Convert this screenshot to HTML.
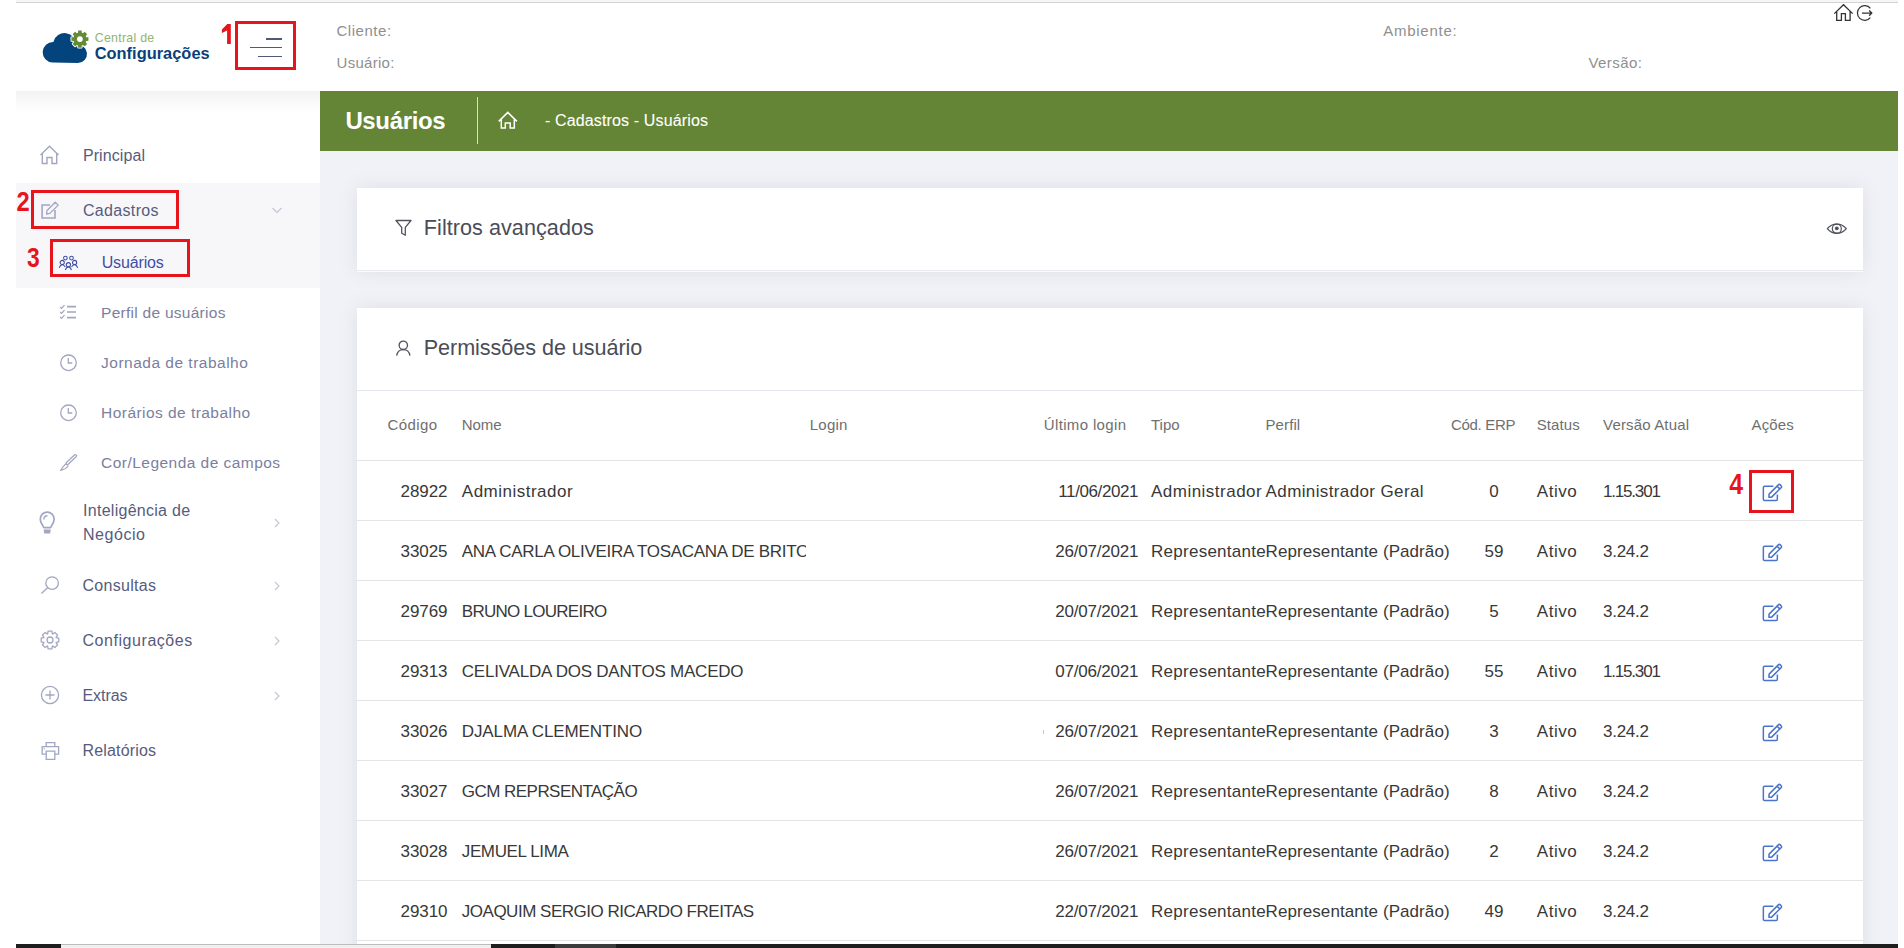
<!DOCTYPE html>
<html><head><meta charset="utf-8"><title>Usuários</title>
<style>
html,body{margin:0;padding:0;}
body{width:1904px;height:948px;position:relative;overflow:hidden;background:#fff;font-family:"Liberation Sans", sans-serif;}
.t{position:absolute;white-space:nowrap;}
.b{position:absolute;}
</style></head><body>
<div class="b" style="left:16px;top:0px;width:1882px;height:2px;background:#f6f6f6;"></div>
<div class="b" style="left:16px;top:2px;width:1882px;height:1px;background:#d3d3d3;"></div>
<svg class="b" style="left:40px;top:26px;" width="60" height="42" viewBox="0 0 60 42" fill="none">
<path d="M12.6 36.6 A10.2 10.2 0 1 1 13.41 15.93 A11.5 11.5 0 0 1 36.09 18.98 A9.1 9.1 0 1 1 37.9 37 Z" fill="#03447c"/>
<polygon points="37.95,6.79 38.17,4.57 41.63,4.57 41.85,6.79 42.98,7.26 44.71,5.85 47.15,8.29 45.74,10.02 46.21,11.15 48.43,11.37 48.43,14.83 46.21,15.05 45.74,16.18 47.15,17.91 44.71,20.35 42.98,18.94 41.85,19.41 41.63,21.63 38.17,21.63 37.95,19.41 36.82,18.94 35.09,20.35 32.65,17.91 34.06,16.18 33.59,15.05 31.37,14.83 31.37,11.37 33.59,11.15 34.06,10.02 32.65,8.29 35.09,5.85 36.82,7.26" fill="#658a35" stroke="#fff" stroke-width="1.8" stroke-linejoin="round"/>
<polygon points="37.95,6.79 38.17,4.57 41.63,4.57 41.85,6.79 42.98,7.26 44.71,5.85 47.15,8.29 45.74,10.02 46.21,11.15 48.43,11.37 48.43,14.83 46.21,15.05 45.74,16.18 47.15,17.91 44.71,20.35 42.98,18.94 41.85,19.41 41.63,21.63 38.17,21.63 37.95,19.41 36.82,18.94 35.09,20.35 32.65,17.91 34.06,16.18 33.59,15.05 31.37,14.83 31.37,11.37 33.59,11.15 34.06,10.02 32.65,8.29 35.09,5.85 36.82,7.26" fill="#658a35"/>
<circle cx="39.9" cy="13.1" r="2.9" fill="#fff"/>
</svg>
<div class="t" style="left:94.7px;top:32px;font-size:12.4px;line-height:12.4px;color:#93b273;letter-spacing:0.264px;">Central de</div>
<div class="t" style="left:94.7px;top:45px;font-size:16.4px;line-height:16.4px;color:#0b3f79;font-weight:700;letter-spacing:0.017px;">Configurações</div>
<div class="b" style="left:266px;top:38px;width:16px;height:2px;background:#50597a;"></div>
<div class="b" style="left:250px;top:47px;width:32px;height:1px;background:#50597a;"></div>
<div class="b" style="left:258px;top:55.5px;width:24px;height:1px;background:#50597a;"></div>
<div class="t" style="left:336.5px;top:23px;font-size:15px;line-height:15px;color:#8f8f8f;letter-spacing:0.536px;">Cliente:</div>
<div class="t" style="left:336.6px;top:55px;font-size:15px;line-height:15px;color:#8f8f8f;letter-spacing:0.275px;">Usuário:</div>
<div class="t" style="left:1383.2px;top:23px;font-size:15px;line-height:15px;color:#8f8f8f;letter-spacing:0.753px;">Ambiente:</div>
<div class="t" style="left:1588.5px;top:55px;font-size:15px;line-height:15px;color:#8f8f8f;letter-spacing:0.425px;">Versão:</div>
<svg class="b" style="left:1832px;top:2px;" width="44" height="22" viewBox="0 0 44 22" fill="none">
<path d="M2.3 11.6 L11.5 2.7 L20.7 11.6 M4.7 9.6 V18.3 H9.4 V11.6 H13.4 V18.3 H18.1 V9.6" stroke="#333" stroke-width="1.3" stroke-linejoin="miter"/>
<path d="M38.4 6.4 A7.3 7.3 0 1 0 38.4 15.6" stroke="#333" stroke-width="1.25"/>
<path d="M30 11.1 H39.6 M37.2 8.5 L39.7 11.1 L37.2 13.7" stroke="#333" stroke-width="1.4"/>
</svg>
<div class="b" style="left:16px;top:91px;width:304px;height:853px;background:#fff;"></div>
<div class="b" style="left:16px;top:91px;width:304px;height:22px;background:linear-gradient(#f3f3f3,#fff);"></div>
<div class="b" style="left:16px;top:183px;width:304px;height:105px;background:#f7f7fa;"></div>
<svg class="b" style="left:38px;top:144px;" width="24" height="22" viewBox="0 0 24 22" fill="none"><path d="M2.5 11 L11.5 2.3 L20.5 11 M4.3 9.3 V19.5 H9 V13.5 H14 V19.5 H18.7 V9.3" stroke="#a2a6c0" stroke-width="1.4"/></svg>
<div class="t" style="left:82.9px;top:148px;font-size:16px;line-height:16px;color:#575b7d;letter-spacing:0.105px;">Principal</div>
<svg class="b" style="left:38px;top:199px;" width="24" height="22" viewBox="0 0 24 22" fill="none"><path d="M12 6 H4.1 V19 H17 V11" stroke="#a2a6c0" stroke-width="1.6"/><path d="M8.5 15 L9 11.5 L17.3 3.2 L20.2 6.1 L11.9 14.4 Z" stroke="#a2a6c0" stroke-width="1.3" stroke-linejoin="round"/></svg>
<div class="t" style="left:82.9px;top:203px;font-size:16px;line-height:16px;color:#575b7d;letter-spacing:0.343px;">Cadastros</div>
<svg class="b" style="left:270px;top:204px;" width="14" height="12" viewBox="0 0 14 12" fill="none"><path d="M2.5 4 L7 8.5 L11.5 4" stroke="#c3c5d4" stroke-width="1.1"/></svg>
<svg class="b" style="left:56px;top:252px;" width="26" height="20" viewBox="0 0 26 20" fill="none"><g stroke="#3f4ea6" stroke-width="1.05">
<circle cx="9.4" cy="6.1" r="1.85"/><circle cx="15.5" cy="6.1" r="1.85"/>
<circle cx="6.2" cy="10.5" r="2.1"/><circle cx="18.6" cy="10.5" r="2.1"/><circle cx="12.4" cy="12.7" r="2.1"/>
<path d="M3.3 15.8 Q4.3 12.7 6.2 12.7 Q8.1 12.7 9.3 15"/>
<path d="M21.6 15.8 Q20.6 12.7 18.6 12.7 Q16.7 12.7 15.5 15"/>
<path d="M9.3 18 Q10.4 14.9 12.4 14.9 Q14.4 14.9 15.5 18"/>
</g></svg>
<div class="t" style="left:101.7px;top:255px;font-size:16px;line-height:16px;color:#3f4ea6;letter-spacing:-0.146px;">Usuários</div>
<svg class="b" style="left:57px;top:302px;" width="24" height="20" viewBox="0 0 24 20" fill="none"><g stroke="#a2a6c0" stroke-width="1.2">
<path d="M3.2 5 L4.6 6.4 L7.5 3.2 M3.2 10 L4.6 11.4 L7.5 8.2 M3.2 15 L4.6 16.4 L7.5 13.2"/>
<path d="M10 4.6 H19 M10 10 H19 M10 15.6 H19" stroke-width="1.6"/>
</g></svg>
<div class="t" style="left:101.1px;top:305px;font-size:15.5px;line-height:15.5px;color:#7b80a0;letter-spacing:0.268px;">Perfil de usuários</div>
<svg class="b" style="left:57px;top:352px;" width="24" height="22" viewBox="0 0 24 22" fill="none"><circle cx="11.5" cy="10.8" r="7.8" stroke="#a2a6c0" stroke-width="1.3"/><path d="M11.3 6 V11 H15.3" stroke="#a2a6c0" stroke-width="1.3"/></svg>
<div class="t" style="left:101.1px;top:355px;font-size:15.5px;line-height:15.5px;color:#7b80a0;letter-spacing:0.49px;">Jornada de trabalho</div>
<svg class="b" style="left:57px;top:402px;" width="24" height="22" viewBox="0 0 24 22" fill="none"><circle cx="11.5" cy="10.8" r="7.8" stroke="#a2a6c0" stroke-width="1.3"/><path d="M11.3 6 V11 H15.3" stroke="#a2a6c0" stroke-width="1.3"/></svg>
<div class="t" style="left:101.1px;top:405px;font-size:15.5px;line-height:15.5px;color:#7b80a0;letter-spacing:0.451px;">Horários de trabalho</div>
<svg class="b" style="left:57px;top:450px;" width="24" height="24" viewBox="0 0 24 24" fill="none"><path d="M18.3 5.9 L10.3 13.4" stroke="#a2a6c0" stroke-width="3.8" stroke-linecap="round"/><path d="M18.3 5.9 L10.3 13.4" stroke="#fff" stroke-width="1.3" stroke-linecap="round"/><path d="M9.6 13.6 C7.2 14.3 6.2 16.8 3.6 20.3 C7 19.8 9.8 18.6 11.3 15.6" stroke="#a2a6c0" stroke-width="1.2" stroke-linejoin="round"/></svg>
<div class="t" style="left:101.1px;top:455px;font-size:15.5px;line-height:15.5px;color:#7b80a0;letter-spacing:0.464px;">Cor/Legenda de campos</div>
<svg class="b" style="left:36px;top:508px;" width="22" height="28" viewBox="0 0 22 28" fill="none"><path d="M7.9 19.6 L5.7 15.8 C4.7 14.3 4.3 12.9 4.3 11.1 A6.9 6.9 0 0 1 18.1 11.1 C18.1 12.9 17.7 14.3 16.7 15.8 L14.5 19.6 Z" stroke="#a2a6c0" stroke-width="1.7" stroke-linejoin="round"/>
<path d="M7.6 21.4 H14.8 L14.1 25.6 H8.3 Z" fill="#a2a6c0"/>
<path d="M7.9 11.6 A3.7 3.7 0 0 1 11.4 7.8" stroke="#a2a6c0" stroke-width="1.4"/></svg>
<div class="t" style="left:83px;top:503px;font-size:16px;line-height:16px;color:#575b7d;letter-spacing:0.279px;">Inteligência de</div>
<div class="t" style="left:83px;top:527px;font-size:16px;line-height:16px;color:#575b7d;letter-spacing:0.547px;">Negócio</div>
<svg class="b" style="left:36px;top:572px;" width="26" height="26" viewBox="0 0 26 26" fill="none"><circle cx="16.1" cy="11.1" r="6.3" stroke="#a2a6c0" stroke-width="1.3"/><path d="M11.6 15.7 L5.4 21.4" stroke="#a2a6c0" stroke-width="1.3"/></svg>
<div class="t" style="left:82.5px;top:578px;font-size:16px;line-height:16px;color:#575b7d;letter-spacing:0.297px;">Consultas</div>
<svg class="b" style="left:38px;top:628px;" width="24" height="24" viewBox="0 0 24 24" fill="none"><polygon points="10.04,3.22 13.96,3.22 14.33,5.82 14.72,5.99 16.82,4.40 19.60,7.18 18.01,9.28 18.18,9.67 20.78,10.04 20.78,13.96 18.18,14.33 18.01,14.72 19.60,16.82 16.82,19.60 14.72,18.01 14.33,18.18 13.96,20.78 10.04,20.78 9.67,18.18 9.28,18.01 7.18,19.60 4.40,16.82 5.99,14.72 5.82,14.33 3.22,13.96 3.22,10.04 5.82,9.67 5.99,9.28 4.40,7.18 7.18,4.40 9.28,5.99 9.67,5.82" stroke="#a2a6c0" stroke-width="1.3" stroke-linejoin="round"/><circle cx="12" cy="12" r="3" stroke="#a2a6c0" stroke-width="1.3"/></svg>
<div class="t" style="left:82.5px;top:633px;font-size:16px;line-height:16px;color:#575b7d;letter-spacing:0.55px;">Configurações</div>
<svg class="b" style="left:38px;top:683px;" width="24" height="24" viewBox="0 0 24 24" fill="none"><circle cx="12" cy="12" r="8.6" stroke="#a2a6c0" stroke-width="1.3"/><path d="M12 7.5 V16.5 M7.5 12 H16.5" stroke="#a2a6c0" stroke-width="1.3"/></svg>
<div class="t" style="left:82.5px;top:688px;font-size:16px;line-height:16px;color:#575b7d;letter-spacing:-0.072px;">Extras</div>
<svg class="b" style="left:38px;top:738px;" width="24" height="24" viewBox="0 0 24 24" fill="none"><path d="M8.2 8.4 V4.6 H16.8 V8.4" stroke="#a2a6c0" stroke-width="1.3"/><path d="M8 16.2 H4.2 V8.6 H20.6 V16.2 H17" stroke="#a2a6c0" stroke-width="1.3"/><path d="M8.2 13.2 H16.8 V21.3 H8.2 Z" stroke="#a2a6c0" stroke-width="1.3"/><circle cx="6.2" cy="10.8" r="0.7" fill="#a2a6c0"/></svg>
<div class="t" style="left:82.5px;top:743px;font-size:16px;line-height:16px;color:#575b7d;letter-spacing:0.167px;">Relatórios</div>
<svg class="b" style="left:270px;top:516px;" width="14" height="14" viewBox="0 0 14 14" fill="none"><path d="M5 3 L9 7 L5 11" stroke="#c3c5d4" stroke-width="1.1"/></svg>
<svg class="b" style="left:270px;top:578.5px;" width="14" height="14" viewBox="0 0 14 14" fill="none"><path d="M5 3 L9 7 L5 11" stroke="#c3c5d4" stroke-width="1.1"/></svg>
<svg class="b" style="left:270px;top:633.5px;" width="14" height="14" viewBox="0 0 14 14" fill="none"><path d="M5 3 L9 7 L5 11" stroke="#c3c5d4" stroke-width="1.1"/></svg>
<svg class="b" style="left:270px;top:688.5px;" width="14" height="14" viewBox="0 0 14 14" fill="none"><path d="M5 3 L9 7 L5 11" stroke="#c3c5d4" stroke-width="1.1"/></svg>
<div class="b" style="left:320px;top:91px;width:1578px;height:853px;background:#f1f2f7;"></div>
<div class="b" style="left:320px;top:91px;width:1578px;height:60px;background:#658536;"></div>
<div class="t" style="left:345.4px;top:109px;font-size:24px;line-height:24px;color:#fff;font-weight:700;letter-spacing:-0.35px;">Usuários</div>
<div class="b" style="left:477px;top:97px;width:1px;height:47px;background:rgba(255,255,255,0.75);"></div>
<svg class="b" style="left:495px;top:109px;" width="26" height="24" viewBox="0 0 26 24" fill="none"><path d="M3.7 12.4 L12.8 3.4 L21.9 12.4 M6.3 10.2 V19.1 H10.3 V13.9 H15.2 V19.1 H19.3 V10.2" stroke="#fff" stroke-width="1.5"/></svg>
<div class="t" style="left:545px;top:113px;font-size:16px;line-height:16px;color:#fff;letter-spacing:0.139px;-webkit-text-stroke:0.1px #fff;">- Cadastros - Usuários</div>
<div class="b" style="left:357px;top:188px;width:1506px;height:84px;background:#fff;box-shadow:0 0 18px rgba(95,90,115,0.12);"></div>
<div class="b" style="left:357px;top:270px;width:1506px;height:1px;background:#e8e9ef;"></div>
<div class="b" style="left:357px;top:271px;width:1506px;height:1px;background:#fbfbfd;"></div>
<svg class="b" style="left:393px;top:216px;" width="20" height="22" viewBox="0 0 20 22" fill="none"><path d="M3 4.5 H18 L12.3 11.3 V19.3 L8.7 17.3 V11.3 Z" stroke="#50535c" stroke-width="1.3" stroke-linejoin="round"/></svg>
<div class="t" style="left:423.8px;top:217px;font-size:21.6px;line-height:21.6px;color:#4a4d57;letter-spacing:0.048px;">Filtros avançados</div>
<svg class="b" style="left:1825px;top:219.5px;" width="24" height="18" viewBox="0 0 24 18" fill="none"><path d="M2.3 8.6 C5 5.3 8 4.1 11.8 4.1 C15.6 4.1 18.6 5.3 21.3 8.6 C18.6 11.9 15.6 13.3 11.8 13.3 C8 13.3 5 11.9 2.3 8.6 Z" stroke="#50535c" stroke-width="1.3" stroke-linejoin="round"/><circle cx="11.8" cy="8.7" r="4.5" stroke="#50535c" stroke-width="1.2"/><circle cx="11.8" cy="8.3" r="1.9" fill="#50535c"/></svg>
<div class="b" style="left:357px;top:308px;width:1506px;height:700px;background:#fff;box-shadow:0 0 18px rgba(95,90,115,0.12);"></div>
<svg class="b" style="left:393px;top:338px;" width="20" height="20" viewBox="0 0 20 20" fill="none"><circle cx="10.3" cy="7.3" r="4.2" stroke="#50535c" stroke-width="1.3"/><path d="M3.7 17.6 C4.3 13.6 7 11.6 10.3 11.6 C13.6 11.6 16.3 13.6 16.9 17.6" stroke="#50535c" stroke-width="1.3"/></svg>
<div class="t" style="left:423.7px;top:337px;font-size:21.6px;line-height:21.6px;color:#4a4d57;letter-spacing:-0.049px;">Permissões de usuário</div>
<div class="b" style="left:357px;top:390px;width:1506px;height:1px;background:#e6e8ef;"></div>
<div class="t" style="left:387.6px;top:417px;font-size:15px;line-height:15px;color:#6f6f6f;letter-spacing:0.4px;">Código</div>
<div class="t" style="left:461.7px;top:417px;font-size:15px;line-height:15px;color:#6f6f6f;">Nome</div>
<div class="t" style="left:809.8px;top:417px;font-size:15px;line-height:15px;color:#6f6f6f;letter-spacing:0.2px;">Login</div>
<div class="t" style="left:1043.8px;top:417px;font-size:15px;line-height:15px;color:#6f6f6f;letter-spacing:0.35px;">Último login</div>
<div class="t" style="left:1151px;top:417px;font-size:15px;line-height:15px;color:#6f6f6f;">Tipo</div>
<div class="t" style="left:1265.5px;top:417px;font-size:15px;line-height:15px;color:#6f6f6f;letter-spacing:0.1px;">Perfil</div>
<div class="t" style="left:1450.9px;top:417px;font-size:15px;line-height:15px;color:#6f6f6f;letter-spacing:-0.3px;">Cód. ERP</div>
<div class="t" style="left:1536.7px;top:417px;font-size:15px;line-height:15px;color:#6f6f6f;letter-spacing:0.1px;">Status</div>
<div class="t" style="left:1603.1px;top:417px;font-size:15px;line-height:15px;color:#6f6f6f;letter-spacing:0.15px;">Versão Atual</div>
<div class="t" style="left:1751.5px;top:417px;font-size:15px;line-height:15px;color:#6f6f6f;letter-spacing:0.15px;">Ações</div>
<div class="b" style="left:357px;top:460px;width:1506px;height:1px;background:#e4e4e4;"></div>
<div class="t" style="left:224px;width:400px;text-align:center;top:483px;font-size:17px;line-height:17px;color:#383838;letter-spacing:-0.1px;">28922</div>
<div class="t" style="left:461.8px;top:483px;font-size:17px;line-height:17px;color:#383838;letter-spacing:0.492px;">Administrador</div>
<div class="t" style="left:738.0989999999999px;width:400px;text-align:right;top:483px;font-size:17px;line-height:17px;color:#383838;letter-spacing:-0.401px;">11/06/2021</div>
<div class="t" style="left:1151px;top:483px;font-size:17px;line-height:17px;color:#383838;letter-spacing:0.484px;">Administrador</div>
<div class="t" style="left:1265.6px;top:483px;font-size:17px;line-height:17px;color:#383838;letter-spacing:0.376px;">Administrador Geral</div>
<div class="t" style="left:1294px;width:400px;text-align:center;top:483px;font-size:17px;line-height:17px;color:#383838;">0</div>
<div class="t" style="left:1536.8px;top:483px;font-size:17px;line-height:17px;color:#383838;letter-spacing:0.519px;">Ativo</div>
<div class="t" style="left:1603px;top:483px;font-size:17px;line-height:17px;color:#383838;letter-spacing:-1.188px;">1.15.301</div>
<svg class="b" style="left:1758px;top:481px;" width="28" height="24" viewBox="0 0 28 24" fill="none"><path d="M15.4 5.35 H6.6 Q5.35 5.35 5.35 6.6 V18.2 Q5.35 19.45 6.6 19.45 H18.1 Q19.35 19.45 19.35 18.2 V13.5" stroke="#4a74c9" stroke-width="1.5"/><path d="M10.9 16.3 L11.1 13.1 L20.3 3.9 Q21.3 2.9 22.3 3.9 L23.1 4.7 Q24.1 5.7 23.1 6.7 L13.9 15.9 Q13.5 16.3 12.9 16.3 Z M19.1 5.2 L21.8 7.9" stroke="#4a74c9" stroke-width="1.5" stroke-linejoin="round"/></svg>
<div class="b" style="left:357px;top:520px;width:1506px;height:1px;background:#e4e4e4;"></div>
<div class="t" style="left:224px;width:400px;text-align:center;top:543px;font-size:17px;line-height:17px;color:#383838;letter-spacing:-0.1px;">33025</div>
<div class="t" style="left:461.8px;top:543px;font-size:17px;line-height:17px;color:#383838;letter-spacing:-0.306px;width:344.6px;overflow:hidden;">ANA CARLA OLIVEIRA TOSACANA DE BRITO</div>
<div class="t" style="left:738.2909999999999px;width:400px;text-align:right;top:543px;font-size:17px;line-height:17px;color:#383838;letter-spacing:-0.209px;">26/07/2021</div>
<div class="t" style="left:1151px;top:543px;font-size:17px;line-height:17px;color:#383838;letter-spacing:0.265px;">Representante</div>
<div class="t" style="left:1265.6px;top:543px;font-size:17px;line-height:17px;color:#383838;letter-spacing:0.076px;">Representante (Padrão)</div>
<div class="t" style="left:1294px;width:400px;text-align:center;top:543px;font-size:17px;line-height:17px;color:#383838;">59</div>
<div class="t" style="left:1536.8px;top:543px;font-size:17px;line-height:17px;color:#383838;letter-spacing:0.519px;">Ativo</div>
<div class="t" style="left:1603px;top:543px;font-size:17px;line-height:17px;color:#383838;letter-spacing:-0.272px;">3.24.2</div>
<svg class="b" style="left:1758px;top:541px;" width="28" height="24" viewBox="0 0 28 24" fill="none"><path d="M15.4 5.35 H6.6 Q5.35 5.35 5.35 6.6 V18.2 Q5.35 19.45 6.6 19.45 H18.1 Q19.35 19.45 19.35 18.2 V13.5" stroke="#4a74c9" stroke-width="1.5"/><path d="M10.9 16.3 L11.1 13.1 L20.3 3.9 Q21.3 2.9 22.3 3.9 L23.1 4.7 Q24.1 5.7 23.1 6.7 L13.9 15.9 Q13.5 16.3 12.9 16.3 Z M19.1 5.2 L21.8 7.9" stroke="#4a74c9" stroke-width="1.5" stroke-linejoin="round"/></svg>
<div class="b" style="left:357px;top:580px;width:1506px;height:1px;background:#e4e4e4;"></div>
<div class="t" style="left:224px;width:400px;text-align:center;top:603px;font-size:17px;line-height:17px;color:#383838;letter-spacing:-0.1px;">29769</div>
<div class="t" style="left:461.8px;top:603px;font-size:17px;line-height:17px;color:#383838;letter-spacing:-0.728px;">BRUNO LOUREIRO</div>
<div class="t" style="left:738.2909999999999px;width:400px;text-align:right;top:603px;font-size:17px;line-height:17px;color:#383838;letter-spacing:-0.209px;">20/07/2021</div>
<div class="t" style="left:1151px;top:603px;font-size:17px;line-height:17px;color:#383838;letter-spacing:0.265px;">Representante</div>
<div class="t" style="left:1265.6px;top:603px;font-size:17px;line-height:17px;color:#383838;letter-spacing:0.076px;">Representante (Padrão)</div>
<div class="t" style="left:1294px;width:400px;text-align:center;top:603px;font-size:17px;line-height:17px;color:#383838;">5</div>
<div class="t" style="left:1536.8px;top:603px;font-size:17px;line-height:17px;color:#383838;letter-spacing:0.519px;">Ativo</div>
<div class="t" style="left:1603px;top:603px;font-size:17px;line-height:17px;color:#383838;letter-spacing:-0.272px;">3.24.2</div>
<svg class="b" style="left:1758px;top:601px;" width="28" height="24" viewBox="0 0 28 24" fill="none"><path d="M15.4 5.35 H6.6 Q5.35 5.35 5.35 6.6 V18.2 Q5.35 19.45 6.6 19.45 H18.1 Q19.35 19.45 19.35 18.2 V13.5" stroke="#4a74c9" stroke-width="1.5"/><path d="M10.9 16.3 L11.1 13.1 L20.3 3.9 Q21.3 2.9 22.3 3.9 L23.1 4.7 Q24.1 5.7 23.1 6.7 L13.9 15.9 Q13.5 16.3 12.9 16.3 Z M19.1 5.2 L21.8 7.9" stroke="#4a74c9" stroke-width="1.5" stroke-linejoin="round"/></svg>
<div class="b" style="left:357px;top:640px;width:1506px;height:1px;background:#e4e4e4;"></div>
<div class="t" style="left:224px;width:400px;text-align:center;top:663px;font-size:17px;line-height:17px;color:#383838;letter-spacing:-0.1px;">29313</div>
<div class="t" style="left:461.8px;top:663px;font-size:17px;line-height:17px;color:#383838;letter-spacing:-0.222px;">CELIVALDA DOS DANTOS MACEDO</div>
<div class="t" style="left:738.2909999999999px;width:400px;text-align:right;top:663px;font-size:17px;line-height:17px;color:#383838;letter-spacing:-0.209px;">07/06/2021</div>
<div class="t" style="left:1151px;top:663px;font-size:17px;line-height:17px;color:#383838;letter-spacing:0.265px;">Representante</div>
<div class="t" style="left:1265.6px;top:663px;font-size:17px;line-height:17px;color:#383838;letter-spacing:0.076px;">Representante (Padrão)</div>
<div class="t" style="left:1294px;width:400px;text-align:center;top:663px;font-size:17px;line-height:17px;color:#383838;">55</div>
<div class="t" style="left:1536.8px;top:663px;font-size:17px;line-height:17px;color:#383838;letter-spacing:0.519px;">Ativo</div>
<div class="t" style="left:1603px;top:663px;font-size:17px;line-height:17px;color:#383838;letter-spacing:-1.188px;">1.15.301</div>
<svg class="b" style="left:1758px;top:661px;" width="28" height="24" viewBox="0 0 28 24" fill="none"><path d="M15.4 5.35 H6.6 Q5.35 5.35 5.35 6.6 V18.2 Q5.35 19.45 6.6 19.45 H18.1 Q19.35 19.45 19.35 18.2 V13.5" stroke="#4a74c9" stroke-width="1.5"/><path d="M10.9 16.3 L11.1 13.1 L20.3 3.9 Q21.3 2.9 22.3 3.9 L23.1 4.7 Q24.1 5.7 23.1 6.7 L13.9 15.9 Q13.5 16.3 12.9 16.3 Z M19.1 5.2 L21.8 7.9" stroke="#4a74c9" stroke-width="1.5" stroke-linejoin="round"/></svg>
<div class="b" style="left:357px;top:700px;width:1506px;height:1px;background:#e4e4e4;"></div>
<div class="t" style="left:224px;width:400px;text-align:center;top:723px;font-size:17px;line-height:17px;color:#383838;letter-spacing:-0.1px;">33026</div>
<div class="t" style="left:461.8px;top:723px;font-size:17px;line-height:17px;color:#383838;letter-spacing:-0.12px;">DJALMA CLEMENTINO</div>
<div class="t" style="left:738.2909999999999px;width:400px;text-align:right;top:723px;font-size:17px;line-height:17px;color:#383838;letter-spacing:-0.209px;">26/07/2021</div>
<div class="t" style="left:1151px;top:723px;font-size:17px;line-height:17px;color:#383838;letter-spacing:0.265px;">Representante</div>
<div class="t" style="left:1265.6px;top:723px;font-size:17px;line-height:17px;color:#383838;letter-spacing:0.076px;">Representante (Padrão)</div>
<div class="t" style="left:1294px;width:400px;text-align:center;top:723px;font-size:17px;line-height:17px;color:#383838;">3</div>
<div class="t" style="left:1536.8px;top:723px;font-size:17px;line-height:17px;color:#383838;letter-spacing:0.519px;">Ativo</div>
<div class="t" style="left:1603px;top:723px;font-size:17px;line-height:17px;color:#383838;letter-spacing:-0.272px;">3.24.2</div>
<svg class="b" style="left:1758px;top:721px;" width="28" height="24" viewBox="0 0 28 24" fill="none"><path d="M15.4 5.35 H6.6 Q5.35 5.35 5.35 6.6 V18.2 Q5.35 19.45 6.6 19.45 H18.1 Q19.35 19.45 19.35 18.2 V13.5" stroke="#4a74c9" stroke-width="1.5"/><path d="M10.9 16.3 L11.1 13.1 L20.3 3.9 Q21.3 2.9 22.3 3.9 L23.1 4.7 Q24.1 5.7 23.1 6.7 L13.9 15.9 Q13.5 16.3 12.9 16.3 Z M19.1 5.2 L21.8 7.9" stroke="#4a74c9" stroke-width="1.5" stroke-linejoin="round"/></svg>
<div class="b" style="left:357px;top:760px;width:1506px;height:1px;background:#e4e4e4;"></div>
<div class="t" style="left:224px;width:400px;text-align:center;top:783px;font-size:17px;line-height:17px;color:#383838;letter-spacing:-0.1px;">33027</div>
<div class="t" style="left:461.8px;top:783px;font-size:17px;line-height:17px;color:#383838;letter-spacing:-0.537px;">GCM REPRSENTAÇÃO</div>
<div class="t" style="left:738.2909999999999px;width:400px;text-align:right;top:783px;font-size:17px;line-height:17px;color:#383838;letter-spacing:-0.209px;">26/07/2021</div>
<div class="t" style="left:1151px;top:783px;font-size:17px;line-height:17px;color:#383838;letter-spacing:0.265px;">Representante</div>
<div class="t" style="left:1265.6px;top:783px;font-size:17px;line-height:17px;color:#383838;letter-spacing:0.076px;">Representante (Padrão)</div>
<div class="t" style="left:1294px;width:400px;text-align:center;top:783px;font-size:17px;line-height:17px;color:#383838;">8</div>
<div class="t" style="left:1536.8px;top:783px;font-size:17px;line-height:17px;color:#383838;letter-spacing:0.519px;">Ativo</div>
<div class="t" style="left:1603px;top:783px;font-size:17px;line-height:17px;color:#383838;letter-spacing:-0.272px;">3.24.2</div>
<svg class="b" style="left:1758px;top:781px;" width="28" height="24" viewBox="0 0 28 24" fill="none"><path d="M15.4 5.35 H6.6 Q5.35 5.35 5.35 6.6 V18.2 Q5.35 19.45 6.6 19.45 H18.1 Q19.35 19.45 19.35 18.2 V13.5" stroke="#4a74c9" stroke-width="1.5"/><path d="M10.9 16.3 L11.1 13.1 L20.3 3.9 Q21.3 2.9 22.3 3.9 L23.1 4.7 Q24.1 5.7 23.1 6.7 L13.9 15.9 Q13.5 16.3 12.9 16.3 Z M19.1 5.2 L21.8 7.9" stroke="#4a74c9" stroke-width="1.5" stroke-linejoin="round"/></svg>
<div class="b" style="left:357px;top:820px;width:1506px;height:1px;background:#e4e4e4;"></div>
<div class="t" style="left:224px;width:400px;text-align:center;top:843px;font-size:17px;line-height:17px;color:#383838;letter-spacing:-0.1px;">33028</div>
<div class="t" style="left:461.8px;top:843px;font-size:17px;line-height:17px;color:#383838;letter-spacing:-0.383px;">JEMUEL LIMA</div>
<div class="t" style="left:738.2909999999999px;width:400px;text-align:right;top:843px;font-size:17px;line-height:17px;color:#383838;letter-spacing:-0.209px;">26/07/2021</div>
<div class="t" style="left:1151px;top:843px;font-size:17px;line-height:17px;color:#383838;letter-spacing:0.265px;">Representante</div>
<div class="t" style="left:1265.6px;top:843px;font-size:17px;line-height:17px;color:#383838;letter-spacing:0.076px;">Representante (Padrão)</div>
<div class="t" style="left:1294px;width:400px;text-align:center;top:843px;font-size:17px;line-height:17px;color:#383838;">2</div>
<div class="t" style="left:1536.8px;top:843px;font-size:17px;line-height:17px;color:#383838;letter-spacing:0.519px;">Ativo</div>
<div class="t" style="left:1603px;top:843px;font-size:17px;line-height:17px;color:#383838;letter-spacing:-0.272px;">3.24.2</div>
<svg class="b" style="left:1758px;top:841px;" width="28" height="24" viewBox="0 0 28 24" fill="none"><path d="M15.4 5.35 H6.6 Q5.35 5.35 5.35 6.6 V18.2 Q5.35 19.45 6.6 19.45 H18.1 Q19.35 19.45 19.35 18.2 V13.5" stroke="#4a74c9" stroke-width="1.5"/><path d="M10.9 16.3 L11.1 13.1 L20.3 3.9 Q21.3 2.9 22.3 3.9 L23.1 4.7 Q24.1 5.7 23.1 6.7 L13.9 15.9 Q13.5 16.3 12.9 16.3 Z M19.1 5.2 L21.8 7.9" stroke="#4a74c9" stroke-width="1.5" stroke-linejoin="round"/></svg>
<div class="b" style="left:357px;top:880px;width:1506px;height:1px;background:#e4e4e4;"></div>
<div class="t" style="left:224px;width:400px;text-align:center;top:903px;font-size:17px;line-height:17px;color:#383838;letter-spacing:-0.1px;">29310</div>
<div class="t" style="left:461.8px;top:903px;font-size:17px;line-height:17px;color:#383838;letter-spacing:-0.492px;">JOAQUIM SERGIO RICARDO FREITAS</div>
<div class="t" style="left:738.2909999999999px;width:400px;text-align:right;top:903px;font-size:17px;line-height:17px;color:#383838;letter-spacing:-0.209px;">22/07/2021</div>
<div class="t" style="left:1151px;top:903px;font-size:17px;line-height:17px;color:#383838;letter-spacing:0.265px;">Representante</div>
<div class="t" style="left:1265.6px;top:903px;font-size:17px;line-height:17px;color:#383838;letter-spacing:0.076px;">Representante (Padrão)</div>
<div class="t" style="left:1294px;width:400px;text-align:center;top:903px;font-size:17px;line-height:17px;color:#383838;">49</div>
<div class="t" style="left:1536.8px;top:903px;font-size:17px;line-height:17px;color:#383838;letter-spacing:0.519px;">Ativo</div>
<div class="t" style="left:1603px;top:903px;font-size:17px;line-height:17px;color:#383838;letter-spacing:-0.272px;">3.24.2</div>
<svg class="b" style="left:1758px;top:901px;" width="28" height="24" viewBox="0 0 28 24" fill="none"><path d="M15.4 5.35 H6.6 Q5.35 5.35 5.35 6.6 V18.2 Q5.35 19.45 6.6 19.45 H18.1 Q19.35 19.45 19.35 18.2 V13.5" stroke="#4a74c9" stroke-width="1.5"/><path d="M10.9 16.3 L11.1 13.1 L20.3 3.9 Q21.3 2.9 22.3 3.9 L23.1 4.7 Q24.1 5.7 23.1 6.7 L13.9 15.9 Q13.5 16.3 12.9 16.3 Z M19.1 5.2 L21.8 7.9" stroke="#4a74c9" stroke-width="1.5" stroke-linejoin="round"/></svg>
<div class="b" style="left:357px;top:940px;width:1506px;height:1px;background:#e4e4e4;"></div>
<div class="b" style="left:1043px;top:730px;width:1px;height:4px;background:#c8c8c8;"></div>
<div class="b" style="left:235px;top:21px;width:61px;height:49px;border:3px solid #e8141c;box-sizing:border-box;"></div>
<div class="b" style="left:31px;top:190px;width:148px;height:39px;border:3px solid #e8141c;box-sizing:border-box;"></div>
<div class="b" style="left:50px;top:239px;width:140px;height:38px;border:3px solid #e8141c;box-sizing:border-box;"></div>
<div class="b" style="left:1749px;top:470px;width:45px;height:43px;border:3px solid #e8141c;box-sizing:border-box;"></div>
<svg class="b" style="left:0;top:0" width="1904" height="948" viewBox="0 0 1904 948" font-family="Liberation Sans"><polygon points="227.3,24.1 230.8,24.1 230.8,44 227.1,44 227.1,30.4 221.9,33.1 221.9,29.4" fill="#e8141c"/><text transform="translate(16.50,211.00) scale(0.832,1)" font-size="28.57" font-weight="700" fill="#e8141c">2</text><text transform="translate(27.00,266.62) scale(0.816,1)" font-size="28.03" font-weight="700" fill="#e8141c">3</text><text transform="translate(1729.30,494.00) scale(0.862,1)" font-size="28.84" font-weight="700" fill="#e8141c">4</text></svg>
<div class="b" style="left:16px;top:944px;width:45px;height:4px;background:#1e1e1e;"></div>
<div class="b" style="left:61px;top:944px;width:430px;height:4px;background:#f0f0f0;border-top:1px solid #bdbdbd;box-sizing:border-box;"></div>
<div class="b" style="left:491px;top:944px;width:64px;height:4px;background:#1e1e1e;"></div>
<div class="b" style="left:555px;top:944px;width:61px;height:4px;background:#3c3c3c;"></div>
<div class="b" style="left:616px;top:944px;width:1282px;height:4px;background:#1e1e1e;"></div>
</body></html>
